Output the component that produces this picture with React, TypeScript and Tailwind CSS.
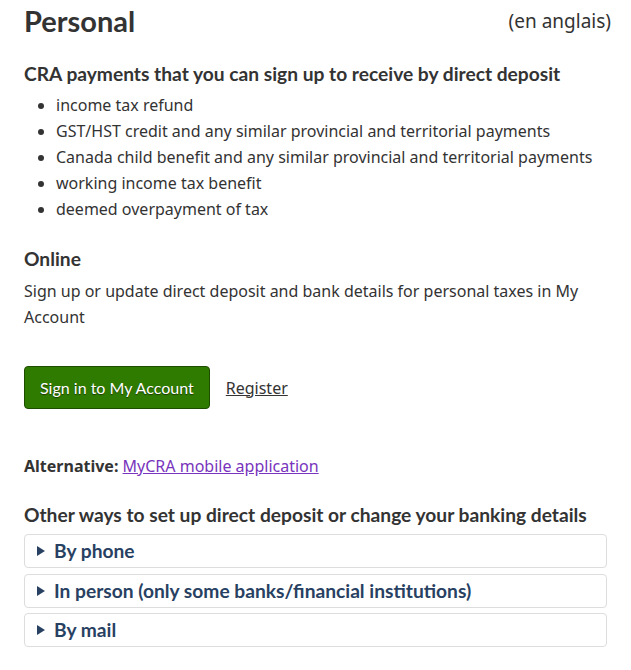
const LATO = "font-['Lato','Liberation_Sans',sans-serif]";
const NOTO = "font-['Noto_Sans','Liberation_Sans',sans-serif]";

const PAYMENTS = [
  "income tax refund",
  "GST/HST credit and any similar provincial and territorial payments",
  "Canada child benefit and any similar provincial and territorial payments",
  "working income tax benefit",
  "deemed overpayment of tax",
];

const OTHER_WAYS = ["By phone", "In person (only some banks/financial institutions)", "By mail"];

function Details({ label }: { label: string }) {
  return (
    <div className="rounded-[4px] border border-[#dddddd] bg-white">
      <div className={`flex items-center gap-[9px] py-[4px] pl-[12px] text-[19.2px] font-bold leading-[24px] text-[#284162] ${LATO}`}>
        <svg width="8" height="10" viewBox="0 0 8 10" className="shrink-0">
          <polygon points="0,0 8,5 0,10" fill="#284162" />
        </svg>
        <span>{label}</span>
      </div>
    </div>
  );
}

export default function App() {
  return (
    <div className={`w-[631px] bg-white px-6 text-[#333333] ${NOTO}`}>
      {/* ── Title ── */}
      <div className="flex items-center justify-between pt-[2px]">
        <h2 className={`text-[29px] font-bold leading-[38px] ${LATO}`}>Personal</h2>
        <span className="-mr-[4px] text-[19px]">(en anglais)</span>
      </div>

      {/* ── Payments ── */}
      <h3 className={`mt-[21px] text-[19.2px] font-bold leading-[26px] ${LATO}`}>
        CRA payments that you can sign up to receive by direct deposit
      </h3>
      <ul className="mt-[5px] pl-[32px] text-[16px] leading-[26px]">
        {PAYMENTS.map((p) => (
          <li key={p} className="list-disc">
            {p}
          </li>
        ))}
      </ul>

      {/* ── Online ── */}
      <h3 className={`mt-[24px] text-[19.2px] font-bold leading-[26px] ${LATO}`}>Online</h3>
      <p className="mt-[6px] text-[16px] leading-[26px]">
        Sign up or update direct deposit and bank details for personal taxes in My Account
      </p>

      <div className="mt-[36px] flex items-center gap-[16px]">
        <button
          className={`h-[43px] rounded-[4px] border border-[#1e4d00] bg-[#2f7b00] px-[15px] text-[16px] text-white [text-shadow:0_1px_1px_#1a3a00] ${LATO}`}
        >
          Sign in to My Account
        </button>
        <a href="#" className="text-[16px] text-[#333333] underline">
          Register
        </a>
      </div>

      <p className="mt-[44px] text-[16px] leading-[26px]">
        <strong className="font-bold">Alternative:</strong>{" "}
        <a href="#" className="text-[#7834bc] underline">
          MyCRA mobile application
        </a>
      </p>

      {/* ── Other ways ── */}
      <h3 className={`mt-[23px] text-[19.2px] font-bold leading-[26px] ${LATO}`}>
        Other ways to set up direct deposit or change your banking details
      </h3>
      <div className="mt-[6px] flex flex-col gap-[5.5px]">
        {OTHER_WAYS.map((w) => (
          <Details key={w} label={w} />
        ))}
      </div>
    </div>
  );
}
